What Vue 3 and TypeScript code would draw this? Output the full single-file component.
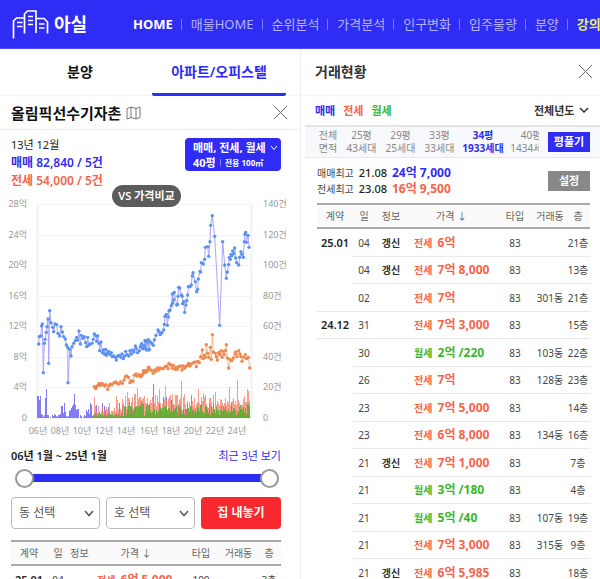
<script setup lang="ts">
import { ref } from 'vue'

interface Deal {
  month?: string
  day: string
  info?: string
  kind: 'jeonse' | 'wolse'
  price: string
  type: string
  dong?: string
  floor: string
  groupEnd?: boolean
}

const navItems = ['매물HOME', '순위분석', '가격분석', '인구변화', '입주물량', '분양']

const areas = [
  { top: '전체', bottom: '면적', width: 'w-s' },
  { top: '25평', bottom: '43세대', width: 'w-m' },
  { top: '29평', bottom: '25세대', width: 'w-m' },
  { top: '33평', bottom: '33세대', width: 'w-m' },
  { top: '34평', bottom: '1933세대', width: 'w-l', active: true },
  { top: '40평', bottom: '1434세대', width: 'w-l' },
]

const deals: Deal[] = [
  { month: '25.01', day: '04', info: '갱신', kind: 'jeonse', price: '6억', type: '83', floor: '21층' },
  { day: '04', info: '갱신', kind: 'jeonse', price: '7억 8,000', type: '83', floor: '13층' },
  { day: '02', kind: 'jeonse', price: '7억', type: '83', dong: '301동', floor: '21층', groupEnd: true },
  { month: '24.12', day: '31', kind: 'jeonse', price: '7억 3,000', type: '83', floor: '15층', groupEnd: true },
  { day: '30', kind: 'wolse', price: '2억 /220', type: '83', dong: '103동', floor: '22층' },
  { day: '26', kind: 'jeonse', price: '7억', type: '83', dong: '128동', floor: '23층' },
  { day: '23', kind: 'jeonse', price: '7억 5,000', type: '83', floor: '14층' },
  { day: '23', kind: 'jeonse', price: '6억 8,000', type: '83', dong: '134동', floor: '16층' },
  { day: '21', info: '갱신', kind: 'jeonse', price: '7억 1,000', type: '83', floor: '7층' },
  { day: '21', kind: 'wolse', price: '3억 /180', type: '83', floor: '4층' },
  { day: '21', kind: 'wolse', price: '5억 /40', type: '83', dong: '107동', floor: '19층' },
  { day: '21', kind: 'jeonse', price: '7억 3,000', type: '83', dong: '315동', floor: '9층' },
  { day: '21', info: '갱신', kind: 'jeonse', price: '6억 5,985', type: '83', floor: '18층' },
]

const kindLabel = { jeonse: '전세', wolse: '월세' }

const from = ref(0)
const to = ref(100)

/* Chart: coordinates are stored at three units per drawn pixel. */
type Point = [number, number]

const saleEarly: Point[] = [
  [116, 72], [118, 50], [122, 48], [125, 18], [127, 12], [130, 158], [133, 70], [135, 58], [139, 37], [141, 20],
  [144, -3], [146, 130], [149, -28], [153, 8], [158, 22], [161, 35], [165, 12], [170, 14], [174, 40], [179, 48],
  [183, 20], [187, 36], [191, 50], [196, 57], [199, 75], [203, 82], [204, 188], [209, 88], [213, 108], [216, 80],
  [221, 70], [226, 62], [230, 52], [233, 60], [237, 33], [241, 72], [244, 46], [249, 55], [253, 50], [257, 68],
  [260, 80], [263, 52], [266, 76], [270, 72], [276, 70], [280, 58], [283, 42], [288, 48], [290, 64], [293, 48],
  [297, 70], [299, 92], [303, 66], [307, 98], [310, 90], [313, 102], [317, 88], [319, 106], [322, 100], [326, 94],
  [330, 104], [334, 98], [337, 110], [341, 108], [346, 112], [349, 120], [353, 108], [358, 106], [362, 112], [366, 102],
  [370, 116], [374, 108], [377, 94], [382, 104], [386, 108], [390, 92], [394, 102], [398, 90], [402, 96], [406, 78],
  [409, 86], [413, 98], [418, 92], [421, 80], [425, 72], [429, 86], [433, 80], [436, 62], [440, 90], [444, 60], [448, 88],
]
const saleLate: Point[] = [
  [2, 80], [5, 72], [9, 86], [12, 76], [15, 62], [18, 88], [21, 66], [25, 60], [27, 90], [31, 66], [35, 70], [40, 76],
  [43, 60], [48, 46], [54, 30], [58, 36], [61, 44], [66, 38], [71, 30], [73, 13], [75, -11], [79, -17], [82, 16], [85, -9],
  [87, -27], [90, -30], [94, -43], [97, -78], [98, -50], [101, -60], [103, -83], [110, -45], [113, -47], [114, -71],
  [116, -98], [119, -96], [124, -75], [127, -71], [128, -49], [131, -55], [134, -23], [138, -45], [140, -58], [143, -75],
  [145, -100], [150, -100], [154, -105], [157, -132], [159, -142], [166, -115], [170, -85], [173, -92], [175, -123],
  [180, -146], [182, -144], [184, -172], [190, -168], [194, -182], [196, -218], [203, -220], [206, -191], [210, -235],
  [212, -284], [217, -313], [224, -251], [239, 16], [248, -235], [254, -165], [259, -125], [262, -144], [266, -166],
  [268, -188], [271, -182], [273, -197], [276, -193], [278, -207], [281, -199], [284, -216], [287, -186], [290, -172],
  [296, -165], [299, -188], [303, -205], [306, -197], [310, -188], [313, -235], [315, -257], [317, -263], [319, -233],
  [324, -254], [327, -218],
]
const rentEarly: Point[] = [
  [283, 200], [287, 206], [290, 200], [294, 196], [298, 190], [302, 196], [306, 190], [310, 194], [314, 198], [318, 194],
  [323, 208], [327, 198], [331, 192], [336, 194], [342, 188], [347, 186], [352, 190], [357, 192], [362, 186], [367, 190],
  [372, 180], [376, 170], [380, 168], [385, 172], [390, 188], [394, 182], [399, 184], [403, 166], [408, 162], [412, 168],
  [418, 164], [424, 168], [430, 152], [436, 156], [441, 154], [446, 142],
]
const rentLate: Point[] = [
  [2, 170], [6, 166], [10, 160], [14, 152], [18, 156], [22, 150], [26, 142], [30, 148], [35, 152], [40, 160], [44, 150],
  [48, 154], [52, 144], [56, 150], [60, 144], [65, 146], [70, 146], [75, 140], [80, 138], [84, 146], [87, 130], [92, 134],
  [96, 144], [100, 136], [104, 148], [108, 142], [112, 148], [116, 140], [122, 138], [126, 150], [130, 138], [134, 144],
  [138, 140], [142, 136], [146, 130], [150, 138], [154, 132], [160, 128], [165, 126], [169, 140], [173, 124], [178, 128],
  [182, 110], [187, 90], [189, 116], [193, 106], [196, 112], [199, 74], [203, 100], [206, 112], [211, 82], [214, 118],
  [217, 44], [220, 96], [226, 100], [229, 110], [232, 120], [236, 98], [239, 104], [243, 92], [246, 112], [250, 94],
  [253, 104], [256, 92], [259, 74], [262, 114], [266, 144], [270, 118], [275, 122], [280, 114], [285, 102], [287, 96],
  [291, 110], [296, 92], [300, 102], [303, 110], [306, 124], [311, 112], [316, 104], [320, 116], [325, 112], [329, 144],
]

const join = (early: Point[], late: Point[]): Point[] => [
  ...early.map(([x, y]): Point => [x / 3, 320 + y / 3]),
  ...late.map(([x, y]): Point => [140 + x / 3, 320 + y / 3]),
]
const sale = join(saleEarly, saleLate)
const rent = join(rentEarly, rentLate)
const line = (points: Point[]) => points.map(([x, y]) => `${x.toFixed(1)},${y.toFixed(1)}`).join(' ')

/* Monthly volumes: known peaks over a low, repeatable background. */
const noise = (n: number) => {
  const v = Math.sin(n * 12.9898) * 43758.5453
  return v - Math.floor(v)
}
const bars = (start: number, end: number, peaks: Record<number, number>, base: (x: number) => number) => {
  let d = ''
  for (let x = start; x <= end; x++) {
    const h = peaks[x] ?? Math.round(base(x))
    if (h > 0) d += `M${x} 418v-${h}h1v${h}z`
  }
  return d
}
const saleBars = bars(37, 249, {
  37: 22, 38: 22, 39: 18, 40: 22, 41: 4, 42: 3, 45: 20, 46: 29, 47: 3, 48: 3, 50: 1, 54: 4, 58: 3, 59: 3, 60: 4, 61: 12,
  62: 12, 63: 5, 64: 15, 65: 6, 69: 7, 70: 8, 71: 10, 72: 12, 73: 14, 74: 24, 75: 13, 76: 8, 77: 9, 78: 9, 84: 3, 86: 8,
  87: 6, 88: 9, 90: 15, 91: 13, 102: 15, 104: 12, 119: 15, 129: 15, 153: 34, 163: 21, 166: 21, 171: 18, 191: 22,
}, x => (x < 94 ? noise(x) * 4 : x < 200 ? noise(x) * noise(x + 9) * 16 : noise(x) * 5))
const rentBars = bars(94, 249, {
  94: 21, 95: 12, 98: 12, 102: 11, 107: 8, 109: 15, 116: 22, 117: 18, 123: 15, 127: 26, 132: 21, 134: 24, 135: 24, 137: 30,
  139: 21, 145: 15, 147: 20, 149: 15, 155: 23, 159: 29, 165: 32, 170: 23, 172: 24, 176: 23, 181: 37, 184: 24, 198: 29,
  203: 25, 215: 26, 221: 18, 227: 17, 229: 31, 233: 20, 237: 38, 247: 29, 248: 27,
}, x => (x < 120 ? 3 + noise(x + 3) * 8 : 7 + noise(x + 3) * 16))
const monthlyBars = bars(94, 249, { 141: 17, 142: 15, 143: 14, 159: 14, 213: 15, 231: 16 },
  x => 1 + (x < 124 ? noise(x + 7) * 3 : 1 + noise(x + 7) * 12))

const leftAxis = ['28억', '24억', '20억', '16억', '12억', '8억', '4억', '0']
const rightAxis = ['140건', '120건', '100건', '80건', '60건', '40건', '20건', '0']
const years = ['06년', '08년', '10년', '12년', '14년', '16년', '18년', '20년', '22년', '24년']
const tickY = (i: number) => Math.round(204 + i * 30.5)
const yearX = (i: number) => Math.round(38 + (i * 199) / 9)
</script>

<template>
  <div class="page">
    <header class="top">
      <a class="logo" href="#" aria-label="아실">
        <svg width="38" height="30" viewBox="0 0 38 30" fill="none" stroke="#fff" stroke-width="1.7">
          <path d="M1.500 29.500V12L4.500 9H12.500M12.500 24.500V5L15.500 2H24V24M24 9.500H32L35.500 13V24.500" />
          <path d="M5 13.500h5.500M5 17.500h5.500M16 7.500h5M16 11.500h5M16 15.500h5M27 15h5.500M27 19h5.500" stroke-width="1.300" />
        </svg>
        <span>아실</span>
      </a>
      <nav>
        <a class="home" href="#">HOME</a>
        <a v-for="item in navItems" :key="item" href="#">{{ item }}</a>
        <a class="lecture" href="#">강의</a>
      </nav>
    </header>

    <main class="panels">
      <section class="left">
        <div class="tabs">
          <button type="button">분양</button>
          <button type="button" class="active">아파트/오피스텔</button>
        </div>
        <div class="title">
          <h1>올림픽선수기자촌</h1>
          <svg width="15" height="14" viewBox="0 0 15 14" fill="none" stroke="#777" stroke-width="1">
            <path d="M1 2.500L5 1L10 2.500L14 1V11.500L10 13L5 11.500L1 13ZM5 1V11.500M10 2.500V13" />
          </svg>
          <button type="button" class="close" aria-label="닫기">
            <svg width="15" height="15" viewBox="0 0 15 15" stroke="#666"><path d="M1 1L14 14M14 1L1 14" /></svg>
          </button>
        </div>

        <div class="info">
          <div class="figures">
            <p class="date">13년 12월</p>
            <p class="sale">매매 82,840 / 5건</p>
            <p class="jeonse">전세 54,000 / 5건</p>
          </div>
          <button type="button" class="filter">
            <span class="line">매매, 전세, 월세
              <svg width="8" height="6" viewBox="0 0 8 6" fill="none" stroke="#fff"><path d="M1 1L4 4.500L7 1" /></svg>
            </span>
            <span class="line">40평 <i></i><small>전용 100㎡</small></span>
          </button>
        </div>

        <div class="chart">
          <button type="button" class="compare">VS 가격비교</button>
          <svg viewBox="0 190 300 250" role="img" aria-label="가격 추이">
            <g stroke="#f3f3f3">
              <path v-for="(_, i) in leftAxis" :key="i" :d="`M37 ${tickY(i)}.500H252`" />
            </g>
            <path d="M37.500 204V418M251.500 204V418" stroke="#f1f1f1" stroke-width="2" />
            <path :d="saleBars" fill="#5a50f5" fill-opacity="0.750" />
            <path :d="rentBars" fill="#f8735a" fill-opacity="0.700" />
            <path :d="monthlyBars" fill="#5cae2e" fill-opacity="0.900" />
            <polyline :points="line(sale)" fill="none" stroke="#aaa6fa" />
            <circle v-for="(p, i) in sale" :key="'s' + i" :cx="p[0]" :cy="p[1]" r="1.700" fill="#5b92f3" />
            <polyline :points="line(rent)" fill="none" stroke="#f8b79a" />
            <circle v-for="(p, i) in rent" :key="'r' + i" :cx="p[0]" :cy="p[1]" r="1.700" fill="#f3874b" />
            <g class="axis">
              <text v-for="(t, i) in leftAxis" :key="t" x="27" :y="tickY(i) + 3" text-anchor="end">{{ t }}</text>
              <text v-for="(t, i) in rightAxis" :key="t" x="263" :y="tickY(i) + 3">{{ t }}</text>
              <text v-for="(t, i) in years" :key="t" :x="yearX(i)" y="434" text-anchor="middle">{{ t }}</text>
            </g>
          </svg>
        </div>

        <div class="period">
          <strong>06년 1월 ~ 25년 1월</strong>
          <a href="#">최근 3년 보기</a>
        </div>
        <div class="slider">
          <input v-model="from" type="range" min="0" max="100" aria-label="시작" />
          <input v-model="to" type="range" min="0" max="100" aria-label="끝" />
        </div>
        <div class="pickers">
          <label class="picker">
            <select aria-label="동 선택"><option>동 선택</option></select>
            <svg width="10" height="7" viewBox="0 0 10 7" fill="none" stroke="#555" stroke-width="1.500"><path d="M1 1L5 5.500L9 1" /></svg>
          </label>
          <label class="picker">
            <select aria-label="호 선택"><option>호 선택</option></select>
            <svg width="10" height="7" viewBox="0 0 10 7" fill="none" stroke="#555" stroke-width="1.500"><path d="M1 1L5 5.500L9 1" /></svg>
          </label>
          <button type="button">집 내놓기</button>
        </div>
        <table class="deals narrow">
          <colgroup>
            <col class="c-month" /><col class="c-day" /><col class="c-info" /><col /><col class="c-type" /><col class="c-dong" /><col class="c-floor" />
          </colgroup>
          <thead>
            <tr><th>계약</th><th>일</th><th>정보</th><th>가격 ↓</th><th>타입</th><th>거래동</th><th>층</th></tr>
          </thead>
          <tbody>
            <tr>
              <td class="month">25.01</td><td>04</td><td></td>
              <td class="price jeonse"><span>전세</span> 6억 5,000</td><td>100</td><td></td><td>3층</td>
            </tr>
          </tbody>
        </table>
      </section>

      <section class="right">
        <div class="heading">
          <h2>거래현황</h2>
          <button type="button" class="close" aria-label="닫기">
            <svg width="15" height="15" viewBox="0 0 15 15" stroke="#666"><path d="M1 1L14 14M14 1L1 14" /></svg>
          </button>
        </div>
        <div class="kinds">
          <button type="button" class="sale">매매</button>
          <button type="button" class="jeonse">전세</button>
          <button type="button" class="wolse">월세</button>
          <label class="year">
            <select aria-label="년도"><option>전체년도</option></select>
            <svg width="10" height="7" viewBox="0 0 10 7" fill="none" stroke="#333" stroke-width="1.500"><path d="M1 1L5 5L9 1" /></svg>
          </label>
        </div>
        <div class="areas">
          <div class="scroll">
            <button v-for="a in areas" :key="a.bottom" type="button" :class="[a.width, { active: a.active }]">
              <span>{{ a.top }}</span><span>{{ a.bottom }}</span>
            </button>
          </div>
          <button type="button" class="tag blue">평풀기</button>
        </div>
        <div class="highs">
          <div>
            <p>매매최고 <span>21.08</span> <b class="sale">24억 7,000</b></p>
            <p>전세최고 <span>23.08</span> <b class="jeonse">16억 9,500</b></p>
          </div>
          <button type="button" class="tag gray">설정</button>
        </div>
        <table class="deals">
          <colgroup>
            <col class="c-month" /><col class="c-day" /><col class="c-info" /><col /><col class="c-type" /><col class="c-dong" /><col class="c-floor" />
          </colgroup>
          <thead>
            <tr><th>계약</th><th>일</th><th>정보</th><th>가격 ↓</th><th>타입</th><th>거래동</th><th>층</th></tr>
          </thead>
          <tbody>
            <tr v-for="(d, i) in deals" :key="i" :class="{ 'group-end': d.groupEnd }">
              <td class="month">{{ d.month }}</td>
              <td>{{ d.day }}</td>
              <td class="note">{{ d.info }}</td>
              <td class="price" :class="d.kind"><span>{{ kindLabel[d.kind] }}</span> {{ d.price }}</td>
              <td>{{ d.type }}</td>
              <td>{{ d.dong }}</td>
              <td>{{ d.floor }}</td>
            </tr>
          </tbody>
        </table>
      </section>
    </main>
  </div>
</template>

<style>
body {
  margin: 0;
}
</style>

<style scoped>
.page {
  height: 100vh;
  overflow: hidden;
  display: flex;
  flex-direction: column;
  background: #fff;
  color: #222;
  font-family: "Noto Sans", "Noto Sans CJK KR", sans-serif;
  font-size: 12px;
  line-height: 16px;
}
.page * {
  box-sizing: border-box;
}
button,
select {
  margin: 0;
  padding: 0;
  border: 0;
  background: none;
  color: inherit;
  font: inherit;
  cursor: pointer;
}
a {
  color: inherit;
  text-decoration: none;
}
p,
h1,
h2 {
  margin: 0;
}
svg {
  display: block;
  flex: none;
}

.top {
  flex: none;
  display: flex;
  align-items: center;
  height: 49px;
  padding-left: 12px;
  background: #2f2cf5;
  border-bottom: 1px solid #4d4af6;
  color: #fff;
  overflow: hidden;
  white-space: nowrap;
}
.logo {
  flex: none;
  display: flex;
  align-items: center;
  gap: 4px;
  width: 121px;
  font-size: 18px;
  font-weight: 700;
}
.top nav {
  display: flex;
  align-items: center;
}
.top nav a {
  display: flex;
  align-items: center;
  font-size: 13px;
  color: #b5b4fb;
}
.top nav a + a::before {
  content: "";
  width: 1px;
  height: 11px;
  margin: 0 9px 0 8px;
  background: #7b79f8;
}
.top nav .home {
  color: #fff;
  font-weight: 700;
}
.top nav .lecture {
  color: #e6f07a;
  font-weight: 600;
}

.panels {
  flex: 1;
  display: grid;
  grid-template-columns: minmax(0, 1fr) minmax(0, 1fr);
  min-height: 0;
}
.right {
  border-left: 1px solid #eee;
}
.sale {
  color: #2f2cf5;
}
.jeonse {
  color: #fa634b;
}
.wolse {
  color: #3cb52c;
}

.tabs {
  display: grid;
  grid-template-columns: 1fr 1fr;
  gap: 5px;
  height: 47px;
  padding: 0 14px 0 13px;
  border-bottom: 2px solid #f7f7f7;
  font-size: 14px;
  font-weight: 600;
  color: #111;
}
.tabs button {
  height: 47px;
  padding-top: 2px;
  border-bottom: 3px solid transparent;
}
.tabs .active {
  color: #2f2cf5;
  border-color: #2f2cf5;
  border-radius: 2px;
}
.title {
  display: flex;
  align-items: center;
  gap: 5px;
  height: 34px;
  padding: 0 12px 0 11px;
  border-bottom: 1px solid #eee;
}
.title h1 {
  font-size: 15px;
  font-weight: 700;
  color: #111;
}
.close {
  margin-left: auto;
}

.info {
  display: flex;
  justify-content: space-between;
  align-items: flex-start;
  padding: 6px 19px 0 11px;
}
.figures p {
  font-size: 12px;
  line-height: 18px;
  font-weight: 600;
}
.figures .date {
  font-size: 11px;
  font-weight: 400;
}
.filter {
  width: 96px;
  height: 33px;
  margin-top: 2px;
  padding: 1px 8px 0;
  border-radius: 4px;
  background: #2f2cf5;
  color: #fff;
  font-size: 11px;
  font-weight: 700;
  text-align: left;
}
.line {
  display: flex;
  align-items: center;
  gap: 4px;
  line-height: 15px;
  white-space: nowrap;
}
.line i {
  width: 1px;
  height: 7px;
  background: #8b89fa;
}
.line small {
  font-size: 8px;
}

.chart {
  position: relative;
}
.chart > svg {
  width: 100%;
  height: auto;
}
.compare {
  position: absolute;
  top: -5px;
  left: 112px;
  width: 69px;
  height: 22px;
  border-radius: 11px;
  background: #5c5c5c;
  color: #fff;
  font-size: 11px;
  font-weight: 600;
}
.axis {
  fill: #999;
  font-size: 9px;
}

.period {
  display: flex;
  justify-content: space-between;
  padding: 8px 19px 0 11px;
  font-size: 11px;
}
.period strong {
  font-weight: 600;
}
.period a {
  color: #2f2cf5;
}
.slider {
  position: relative;
  height: 20px;
  margin: 4px 21px 0 15px;
  background: linear-gradient(#2f2cf5, #2f2cf5) center no-repeat;
  background-size: calc(100% - 20px) 8px;
}
.slider input {
  position: absolute;
  inset: 0;
  width: 100%;
  height: 20px;
  margin: 0;
  background: none;
  appearance: none;
  pointer-events: none;
}
.slider input::-webkit-slider-thumb {
  appearance: none;
  width: 19px;
  height: 19px;
  border: 2px solid #999;
  border-radius: 50%;
  background: #fff;
  pointer-events: auto;
}
.pickers {
  display: grid;
  grid-template-columns: 89fr 89fr 80fr;
  gap: 6px;
  padding: 9px 19px 0 11px;
}
.picker,
.year {
  display: grid;
  align-items: center;
}
.picker select,
.picker svg,
.year select,
.year svg {
  grid-area: 1 / 1;
}
.picker svg,
.year svg {
  justify-self: end;
  pointer-events: none;
}
.picker select {
  width: 100%;
  height: 32px;
  padding: 0 7px;
  border: 1px solid #bbb;
  border-radius: 4px;
  background: #fff;
  color: #555;
  appearance: none;
}
.picker svg {
  margin-right: 6px;
}
.pickers button {
  height: 32px;
  border-radius: 4px;
  background: #f7292f;
  color: #fff;
  font-weight: 700;
}

.heading {
  display: flex;
  align-items: center;
  height: 47px;
  padding: 0 7px 0 14px;
  border-bottom: 2px solid #f7f7f7;
}
.heading h2 {
  color: #333;
  font-size: 14px;
  font-weight: 600;
}
.kinds {
  display: flex;
  align-items: center;
  gap: 8px;
  height: 29px;
  padding: 0 11px 0 14px;
  font-size: 11px;
  font-weight: 600;
}
.year {
  width: 55px;
  margin-left: auto;
  color: #333;
}
.year select {
  width: 100%;
  appearance: none;
}
.areas {
  display: flex;
  align-items: center;
  gap: 9px;
  height: 33px;
  margin-left: 4px;
  padding: 0 10px 0 9px;
  border-top: 2px solid #e4e4e4;
  border-bottom: 1px solid #e8e8ee;
  background: #f8f9fc;
}
.scroll {
  flex: 1;
  display: flex;
  min-width: 0;
  overflow: hidden;
  color: #888;
  font-size: 10px;
  line-height: 13px;
}
.scroll button {
  flex: none;
  white-space: nowrap;
}
.scroll span {
  display: block;
}
.w-s {
  width: 28px;
}
.w-m {
  width: 39px;
}
.w-l {
  width: 48px;
}
.scroll .active {
  color: #2f2cf5;
  font-weight: 700;
}
.tag {
  flex: none;
  width: 42px;
  height: 20px;
  color: #fff;
  font-size: 11px;
  font-weight: 600;
}
.blue {
  background: #2f2cf5;
}
.gray {
  background: #888;
}
.highs {
  display: flex;
  justify-content: space-between;
  align-items: center;
  height: 45px;
  padding: 0 10px 0 16px;
}
.highs p {
  display: flex;
  gap: 5px;
  color: #444;
  font-size: 10px;
}
.highs p span {
  color: #222;
  font-size: 11px;
  font-weight: 500;
}
.highs p b {
  font-size: 12px;
}

.deals {
  width: calc(100% - 26px);
  margin: 0 10px 0 16px;
  table-layout: fixed;
  border-spacing: 0;
  font-size: 10px;
  text-align: center;
  white-space: nowrap;
}
.c-month {
  width: 36px;
}
.c-day {
  width: 22px;
}
.c-info {
  width: 32px;
}
.c-type {
  width: 38px;
}
.c-dong {
  width: 32px;
}
.c-floor {
  width: 24px;
}
.deals th,
.deals td {
  padding: 0;
}
.deals th {
  height: 26px;
  border-top: 2px solid #aaa;
  border-bottom: 2px solid #aaa;
  background: #fafafa;
  color: #666;
  font-weight: 400;
}
.deals td {
  height: 28px;
  border-bottom: 1px solid #e8e8e8;
  color: #444;
}
.deals tr:nth-child(even) td {
  height: 27px;
}
.deals .month {
  border-bottom-color: transparent;
  color: #222;
  font-size: 11px;
  font-weight: 600;
}
.deals .group-end .month {
  border-bottom-color: #e8e8e8;
}
.deals .note {
  color: #333;
  font-weight: 600;
}
.deals .price {
  padding-left: 7px;
  font-size: 12px;
  font-weight: 700;
  text-align: left;
}
.deals .price span {
  margin-right: 2px;
  font-size: 10px;
}
.deals .jeonse {
  color: #fa634b;
}
.deals .wolse {
  color: #3cb52c;
}
.narrow {
  width: calc(100% - 30px);
  margin: 11px 19px 0 11px;
}
.narrow .c-info {
  width: 21px;
}
.narrow .c-dong {
  width: 37px;
}
</style>
